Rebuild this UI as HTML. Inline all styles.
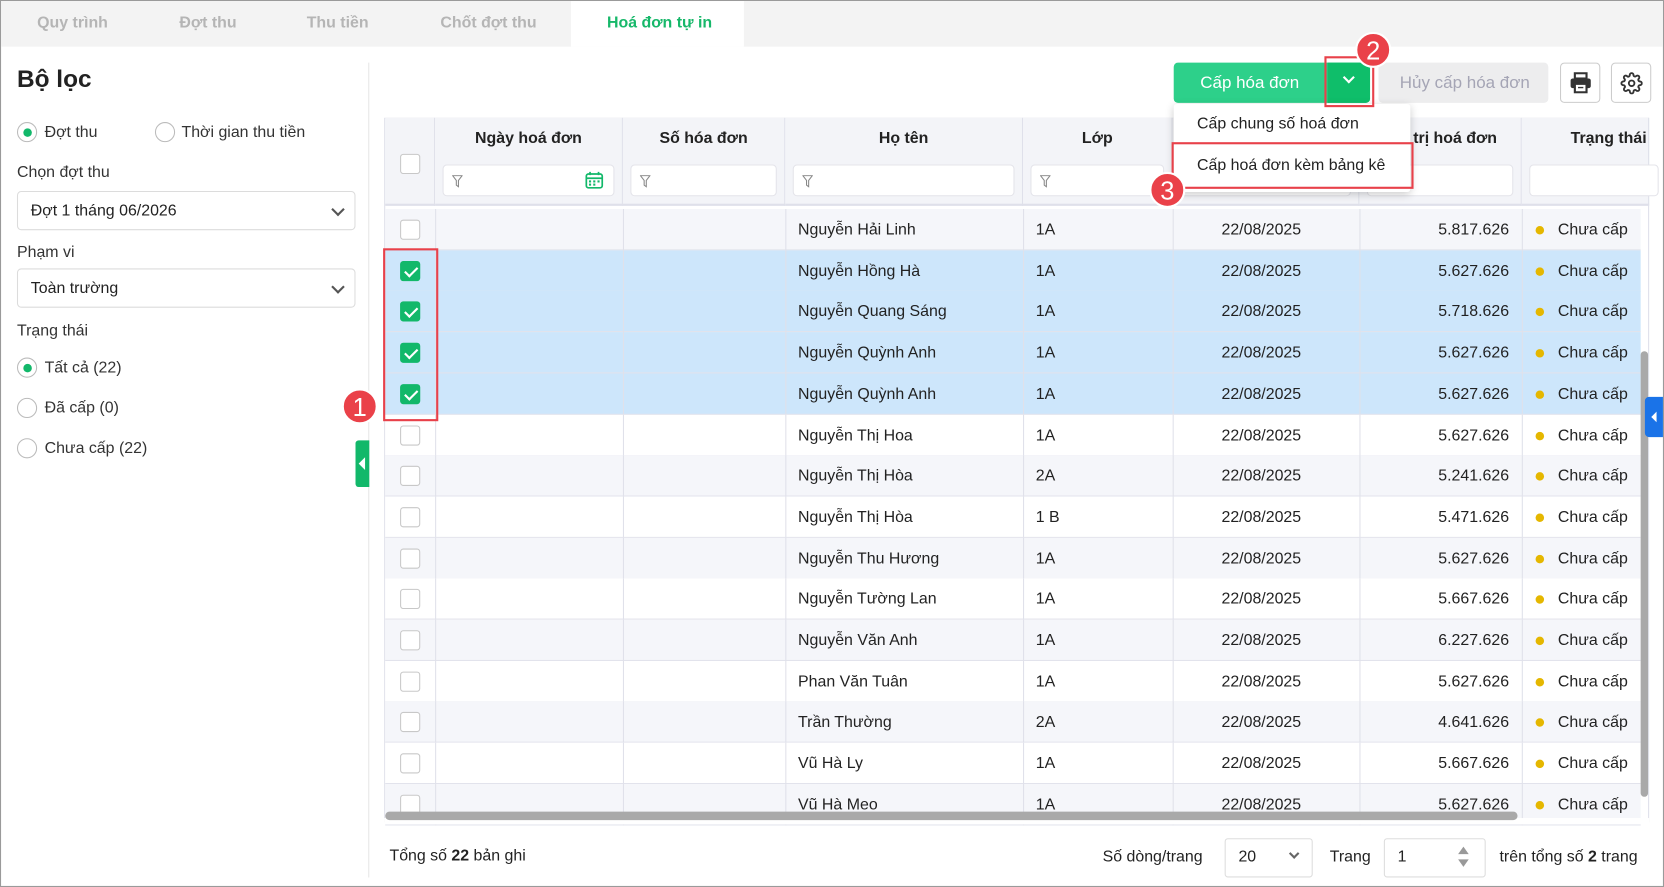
<!DOCTYPE html>
<html><head><meta charset="utf-8"><style>
*{box-sizing:border-box;margin:0;padding:0}
html,body{width:1664px;height:887px;overflow:hidden;background:#fff}
#w{position:absolute;left:0;top:0;width:1568px;height:836px;transform:scale(1.06122,1.061);transform-origin:0 0;font-family:"Liberation Sans",sans-serif;color:#222;font-size:15px;border:1px solid #9a9a9a;overflow:hidden}
.a{position:absolute}
.tab{position:absolute;top:12px;color:#b5b5b5;font-size:15px;font-weight:bold}
.lbl{position:absolute;left:15px;color:#333;font-size:15px}
.sel{position:absolute;left:15px;width:319px;height:37px;border:1px solid #dcdcdc;border-radius:4px;padding:9px 12px;font-size:15px}
.sel:after{content:"";position:absolute;right:11px;top:12px;width:7px;height:7px;border-right:2px solid #555;border-bottom:2px solid #555;transform:rotate(45deg)}
.rad{position:absolute;width:19px;height:19px;border:1px solid #bbb;border-radius:50%}
.rad.on:after{content:"";position:absolute;left:5px;top:5px;width:8px;height:8px;border-radius:50%;background:#12b86a}
.th{position:absolute;top:110px;height:83px;background:#f3f4f8;border-right:1px solid #dfe0ea;border-bottom:2px solid #dfe0ea;font-weight:bold;font-size:15px;text-align:center;padding-top:11px}
.fi{position:absolute;left:7px;right:7px;top:44px;height:30px;background:#fff;border:1px solid #e4e4ea;border-radius:4px}
.fn{position:absolute;left:8px;top:9px}
.cb{position:absolute;width:19px;height:19px;border:1px solid #c8c8c8;border-radius:3px;background:#fff}
.cb.on{background:#12b86a;border-color:#12b86a}
.cb.on:after{content:"";position:absolute;left:6px;top:2px;width:5px;height:10px;border-right:2px solid #fff;border-bottom:2px solid #fff;transform:rotate(45deg)}
.row{position:absolute;left:362px;width:1183px;height:39px;border-bottom:1px solid #e2e3ec;font-size:15px}
.row div{position:absolute;top:11px}
.vl{position:absolute;top:0;height:39px;width:1px;background:#e0e1ea}
.dot{width:8px;height:8px;border-radius:50%;background:#e5b700;top:16px!important}
.badge{position:absolute;width:34px;height:34px;border-radius:50%;background:#ea4149;color:#fff;font-size:24px;text-align:center;line-height:34px;border:2px solid #fff}
.rb{position:absolute;border:2px solid #e8414a}
.btn{position:absolute;border-radius:4px}
</style></head><body><div id="w">
<div class="a" style="left:0;top:0;width:1568px;height:43px;background:#f3f3f3"></div>
<div class="tab" style="left:34px">Quy trình</div>
<div class="tab" style="left:168px">Đợt thu</div>
<div class="tab" style="left:288px">Thu tiền</div>
<div class="tab" style="left:414px">Chốt đợt thu</div>
<div class="a" style="left:537px;top:0;width:163px;height:43px;background:#fff"></div>
<div class="tab" style="left:571px;color:#17b86a">Hoá đơn tự in</div>

<div class="a" style="left:15px;top:60px;font-size:23px;font-weight:bold">Bộ lọc</div>
<div class="rad on" style="left:15px;top:114px"></div><div class="lbl" style="left:41px;top:115px">Đợt thu</div>
<div class="rad" style="left:145px;top:114px"></div><div class="lbl" style="left:170px;top:115px">Thời gian thu tiền</div>
<div class="lbl" style="top:153px">Chọn đợt thu</div>
<div class="sel" style="top:179px">Đợt 1 tháng 06/2026</div>
<div class="lbl" style="top:228px">Phạm vi</div>
<div class="sel" style="top:252px">Toàn trường</div>
<div class="lbl" style="top:302px">Trạng thái</div>
<div class="rad on" style="left:15px;top:336px"></div><div class="lbl" style="left:41px;top:337px">Tất cả (22)</div>
<div class="rad" style="left:15px;top:374px"></div><div class="lbl" style="left:41px;top:375px">Đã cấp (0)</div>
<div class="rad" style="left:15px;top:412px"></div><div class="lbl" style="left:41px;top:413px">Chưa cấp (22)</div>
<div class="a" style="left:346px;top:58px;width:1px;height:768px;background:#e6e6e6"></div>
<div class="a" style="left:334px;top:414px;width:13px;height:44px;background:#12b86a;border-radius:3px 0 0 3px"></div>
<div class="a" style="left:337px;top:430px;border-right:6px solid #fff;border-top:6px solid transparent;border-bottom:6px solid transparent"></div>

<div class="a" style="left:361px;top:110px;width:1192px;height:664px;border:1px solid #dfe0ea"></div>
<div class="th" style="left:362px;width:47px"><div class="cb" style="left:14px;top:34px"></div></div>
<div class="th" style="left:409px;width:177px">Ngày hoá đơn<div class="fi"><svg class="fn" width="10" height="12" viewBox="0 0 10 12"><path d="M0.5 0.5H9.5L6 5V11L4 9.5V5Z" fill="none" stroke="#888"/></svg><svg style="position:absolute;right:9px;top:5px" width="18" height="18" viewBox="0 0 18 18"><rect x="1.5" y="3" width="15" height="13" rx="2" fill="none" stroke="#12b86a" stroke-width="1.6"/><line x1="1.5" y1="7" x2="16.5" y2="7" stroke="#12b86a" stroke-width="1.6"/><line x1="5" y1="1" x2="5" y2="4" stroke="#12b86a" stroke-width="1.6"/><line x1="13" y1="1" x2="13" y2="4" stroke="#12b86a" stroke-width="1.6"/><rect x="4" y="9" width="2" height="2" fill="#12b86a"/><rect x="8" y="9" width="2" height="2" fill="#12b86a"/><rect x="12" y="9" width="2" height="2" fill="#12b86a"/><rect x="4" y="12" width="2" height="2" fill="#12b86a"/><rect x="8" y="12" width="2" height="2" fill="#12b86a"/></svg></div></div>
<div class="th" style="left:586px;width:153px">Số hóa đơn<div class="fi"><svg class="fn" width="10" height="12" viewBox="0 0 10 12"><path d="M0.5 0.5H9.5L6 5V11L4 9.5V5Z" fill="none" stroke="#888"/></svg></div></div>
<div class="th" style="left:739px;width:224px">Họ tên<div class="fi"><svg class="fn" width="10" height="12" viewBox="0 0 10 12"><path d="M0.5 0.5H9.5L6 5V11L4 9.5V5Z" fill="none" stroke="#888"/></svg></div></div>
<div class="th" style="left:963px;width:141px">Lớp<div class="fi"><svg class="fn" width="10" height="12" viewBox="0 0 10 12"><path d="M0.5 0.5H9.5L6 5V11L4 9.5V5Z" fill="none" stroke="#888"/></svg></div></div>
<div class="th" style="left:1104px;width:176px">Ngày tạo<div class="fi"></div></div>
<div class="th" style="left:1280px;width:153px">Giá trị hoá đơn<div class="fi"></div></div>
<div class="th" style="left:1433px;width:120px;text-align:left;padding-left:46px">Trạng thái<div class="fi" style="right:-10px"></div></div>

<div id="rows"></div>
<script>
var d=[["Nguyễn Hải Linh","1A","5.817.626",0],["Nguyễn Hồng Hà","1A","5.627.626",1],["Nguyễn Quang Sáng","1A","5.718.626",1],["Nguyễn Quỳnh Anh","1A","5.627.626",1],["Nguyễn Quỳnh Anh","1A","5.627.626",1],["Nguyễn Thị Hoa","1A","5.627.626",0],["Nguyễn Thị Hòa","2A","5.241.626",0],["Nguyễn Thị Hòa","1 B","5.471.626",0],["Nguyễn Thu Hương","1A","5.627.626",0],["Nguyễn Tường Lan","1A","5.667.626",0],["Nguyễn Văn Anh","1A","6.227.626",0],["Phan Văn Tuân","1A","5.627.626",0],["Trần Thường","2A","4.641.626",0],["Vũ Hà Ly","1A","5.667.626",0],["Vũ Hà Meo","1A","5.627.626",0]];
var h="";
for(var i=0;i<d.length;i++){var t=Math.round(196+i*38.7);var bg=d[i][3]?"#cde6fb":(i%2==0?"#f5f6fa":"#fff");
h+='<div class="row" style="top:'+t+'px;background:'+bg+'">';
[47,224,377,601,742,918,1071].forEach(function(x){h+='<span class="vl" style="left:'+x+'px"></span>'});
h+='<span class="cb'+(d[i][3]?' on':'')+'" style="left:14px;top:10px"></span><div style="left:389px">'+d[i][0]+'</div><div style="left:613px">'+d[i][1]+'</div><div style="left:788px">22/08/2025</div><div style="left:909px;width:150px;text-align:right">'+d[i][2]+'</div><div class="dot" style="left:1084px"></div><div style="left:1105px">Chưa cấp</div></div>';}
document.getElementById("rows").innerHTML=h;
</script>
<div class="a" style="left:361px;top:770px;width:1192px;height:6px;background:#fff"></div>
<div class="a" style="left:362px;top:764px;width:1067px;height:8px;background:#a9a9a9;border-radius:4px"></div>
<div class="a" style="left:1545px;top:330px;width:7px;height:420px;background:#a9a9a9;border-radius:4px"></div>
<div class="a" style="left:1549px;top:373px;width:19px;height:38px;background:#1a73e8;border-radius:4px 0 0 4px"></div>
<div class="a" style="left:1555px;top:387px;border-right:5px solid #fff;border-top:5px solid transparent;border-bottom:5px solid transparent"></div>

<div class="btn" style="left:1105px;top:58px;width:185px;height:38px;background:#2dd08a"></div>
<div class="a" style="left:1130px;top:69px;color:#fff;font-size:16px">Cấp hóa đơn</div>
<div class="a" style="left:1250px;top:58px;width:40px;height:38px;background:#0fbe6a;border-radius:0 4px 4px 0"></div>
<div class="a" style="left:1266px;top:68px;width:8px;height:8px;border-right:2px solid #fff;border-bottom:2px solid #fff;transform:rotate(45deg)"></div>
<div class="btn" style="left:1298px;top:58px;width:160px;height:38px;background:#ededee;color:#a5a5b5;font-size:16px;padding:11px 0 0 20px">Hủy cấp hóa đơn</div>
<div class="btn" style="left:1469px;top:58px;width:38px;height:38px;border:1px solid #ccc"><svg style="position:absolute;left:8px;top:8px" width="21" height="20" viewBox="0 0 21 20"><rect x="5" y="1" width="11" height="5" fill="none" stroke="#333" stroke-width="2"/><rect x="1" y="6" width="19" height="9" rx="2" fill="#333"/><rect x="5" y="11" width="11" height="8" fill="#fff" stroke="#333" stroke-width="2"/><line x1="8" y1="14.5" x2="13" y2="14.5" stroke="#333" stroke-width="1.3"/></svg></div>
<div class="btn" style="left:1517px;top:58px;width:38px;height:38px;border:1px solid #ccc"><svg style="position:absolute;left:8px;top:8px" width="21" height="21" viewBox="0 0 24 24" fill="none" stroke="#333" stroke-width="2"><circle cx="12" cy="12" r="3"/><path d="M19.4 15a1.65 1.65 0 0 0 .33 1.820l.06.06a2 2 0 1 1-2.83 2.83l-.06-.06a1.65 1.65 0 0 0-1.82-.33 1.65 1.65 0 0 0-1 1.51V21a2 2 0 1 1-4 0v-.09A1.65 1.65 0 0 0 9 19.4a1.65 1.65 0 0 0-1.82.33l-.06.06a2 2 0 1 1-2.830-2.830l.06-.06A1.65 1.65 0 0 0 4.68 15a1.65 1.65 0 0 0-1.51-1H3a2 2 0 1 1 0-4h.09A1.65 1.65 0 0 0 4.6 9a1.65 1.65 0 0 0-.33-1.82l-.06-.06a2 2 0 1 1 2.83-2.83l.06.06A1.65 1.65 0 0 0 9 4.68 1.65 1.65 0 0 0 10 3.17V3a2 2 0 1 1 4 0v.09a1.65 1.65 0 0 0 1 1.51 1.65 1.65 0 0 0 1.82-.33l.06-.06a2 2 0 1 1 2.83 2.83l-.06.06A1.65 1.65 0 0 0 19.4 9a1.65 1.65 0 0 0 1.51 1H21a2 2 0 1 1 0 4h-.09a1.65 1.65 0 0 0-1.51 1z"/></svg></div>

<div class="a" style="left:1105px;top:97px;width:223px;height:83px;background:#fff;border-radius:3px;box-shadow:0 2px 8px rgba(0,0,0,.2)"></div>
<div class="a" style="left:1127px;top:107px;font-size:15px">Cấp chung số hoá đơn</div>
<div class="a" style="left:1127px;top:146px;font-size:15px">Cấp hoá đơn kèm bảng kê</div>

<div class="rb" style="left:1247px;top:52px;width:47px;height:48px"></div>
<div class="rb" style="left:1103px;top:133px;width:228px;height:44px"></div>
<div class="rb" style="left:360px;top:233px;width:52px;height:163px"></div>
<div class="badge" style="left:1276px;top:29px">2</div>
<div class="badge" style="left:1082px;top:161px">3</div>
<div class="badge" style="left:321px;top:365px">1</div>

<div class="a" style="left:366px;top:797px">Tổng số <b>22</b> bản ghi</div>
<div class="a" style="left:1038px;top:798px">Số dòng/trang</div>
<div class="a" style="left:1153px;top:789px;width:83px;height:37px;border:1px solid #ddd;border-radius:3px;padding:8px 0 0 12px">20</div>
<div class="a" style="left:1215px;top:800px;width:7px;height:7px;border-right:2px solid #666;border-bottom:2px solid #666;transform:rotate(45deg)"></div>
<div class="a" style="left:1252px;top:798px">Trang</div>
<div class="a" style="left:1303px;top:789px;width:96px;height:37px;border:1px solid #ddd;border-radius:3px;padding:8px 0 0 12px">1</div>
<div class="a" style="left:1373px;top:797px;border-bottom:7px solid #999;border-left:5px solid transparent;border-right:5px solid transparent"></div>
<div class="a" style="left:1373px;top:809px;border-top:7px solid #999;border-left:5px solid transparent;border-right:5px solid transparent"></div>
<div class="a" style="left:1412px;top:798px">trên tổng số <b>2</b> trang</div>
</div></body></html>
